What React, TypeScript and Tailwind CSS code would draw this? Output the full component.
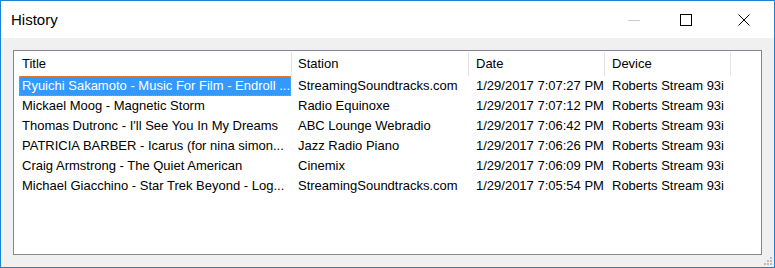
import React from "react";

const rows = [
  ["Ryuichi Sakamoto - Music For Film - Endroll ...", "StreamingSoundtracks.com", "1/29/2017 7:07:27 PM", "Roberts Stream 93i"],
  ["Mickael Moog - Magnetic Storm", "Radio Equinoxe", "1/29/2017 7:07:12 PM", "Roberts Stream 93i"],
  ["Thomas Dutronc - I'll See You In My Dreams", "ABC Lounge Webradio", "1/29/2017 7:06:42 PM", "Roberts Stream 93i"],
  ["PATRICIA BARBER - Icarus (for nina simon...", "Jazz Radio Piano", "1/29/2017 7:06:26 PM", "Roberts Stream 93i"],
  ["Craig Armstrong - The Quiet American", "Cinemix", "1/29/2017 7:06:09 PM", "Roberts Stream 93i"],
  ["Michael Giacchino - Star Trek Beyond - Log...", "StreamingSoundtracks.com", "1/29/2017 7:05:54 PM", "Roberts Stream 93i"],
];

export default function App() {
  return (
    <div
      className="w-[775px] h-[268px] border border-[#1883d7] bg-[#f0f0f0] flex flex-col text-black"
      style={{ fontFamily: '"Liberation Sans", Arial, sans-serif' }}
    >
      {/* Title bar */}
      <div className="h-[37px] bg-white flex items-center shrink-0">
        <div className="pl-[10px] text-[15px] leading-none flex-1 pb-[1px]">History</div>
        <div className="flex items-center h-full">
          <div className="w-[46px] h-full flex items-center justify-center mr-[6px]">
            <div className="w-[12px] h-px bg-[#cccccc] mt-[1px]" />
          </div>
          <div className="w-[46px] h-full flex items-center justify-center">
            <div className="w-[12px] h-[12px] border border-black" />
          </div>
          <div className="w-[46px] h-full flex items-center justify-center ml-[12px] mr-[7px]">
            <svg width="12" height="12" viewBox="0 0 12 12">
              <path d="M0.5 0.5 L11.5 11.5 M11.5 0.5 L0.5 11.5" stroke="black" strokeWidth="1" fill="none" />
            </svg>
          </div>
        </div>
      </div>

      {/* Client area */}
      <div className="flex-1 relative p-[12px] pb-[12px]">
        <div className="w-full h-full border border-[#828790] bg-white flex flex-col overflow-hidden text-[13px]">
          {/* Header */}
          <div className="h-[25px] flex shrink-0">
            {[
              ["Title", "w-[278px] pl-[8px]"],
              ["Station", "w-[177px] pl-[6px]"],
              ["Date", "w-[136px] pl-[7px]"],
              ["Device", "w-[126px] pl-[7px]"],
            ].map(([t, c]) => (
              <div key={t} className={`${c} h-full flex items-center relative shrink-0`}>
                <span className="mt-[1px]">{t}</span>
                <div className="absolute right-0 top-[1px] bottom-0 w-px bg-[#e5e5e5]" />
              </div>
            ))}
          </div>
          {/* Rows */}
          {rows.map((r, i) => {
            const sel = i === 0;
            return (
              <div key={i} className="h-[20px] flex shrink-0 whitespace-nowrap">
                <div className="w-[278px] pl-[5px] pr-[1px] h-full shrink-0">
                  <div
                    className={
                      sel
                        ? "h-full bg-[#3399ff] text-white pl-[2px] flex items-center border border-dotted border-[#e9863a] overflow-hidden"
                        : "h-full pl-[3px] flex items-center overflow-hidden"
                    }
                  >
                    {r[0]}
                  </div>
                </div>
                <div className="w-[177px] pl-[6px] h-full flex items-center shrink-0 overflow-hidden">{r[1]}</div>
                <div className="w-[136px] pl-[7px] h-full flex items-center shrink-0 overflow-hidden">{r[2]}</div>
                <div className="w-[126px] pl-[7px] h-full flex items-center shrink-0 overflow-hidden">{r[3]}</div>
              </div>
            );
          })}
        </div>
        {/* Size grip */}
        <svg className="absolute right-[1px] bottom-[1px]" width="10" height="10" viewBox="0 0 10 10">
          <rect x="7" y="1" width="2" height="2" fill="#bcbcbc" />
          <rect x="4" y="4" width="2" height="2" fill="#bcbcbc" />
          <rect x="7" y="4" width="2" height="2" fill="#bcbcbc" />
          <rect x="1" y="7" width="2" height="2" fill="#bcbcbc" />
          <rect x="4" y="7" width="2" height="2" fill="#bcbcbc" />
          <rect x="7" y="7" width="2" height="2" fill="#bcbcbc" />
        </svg>
      </div>
    </div>
  );
}
